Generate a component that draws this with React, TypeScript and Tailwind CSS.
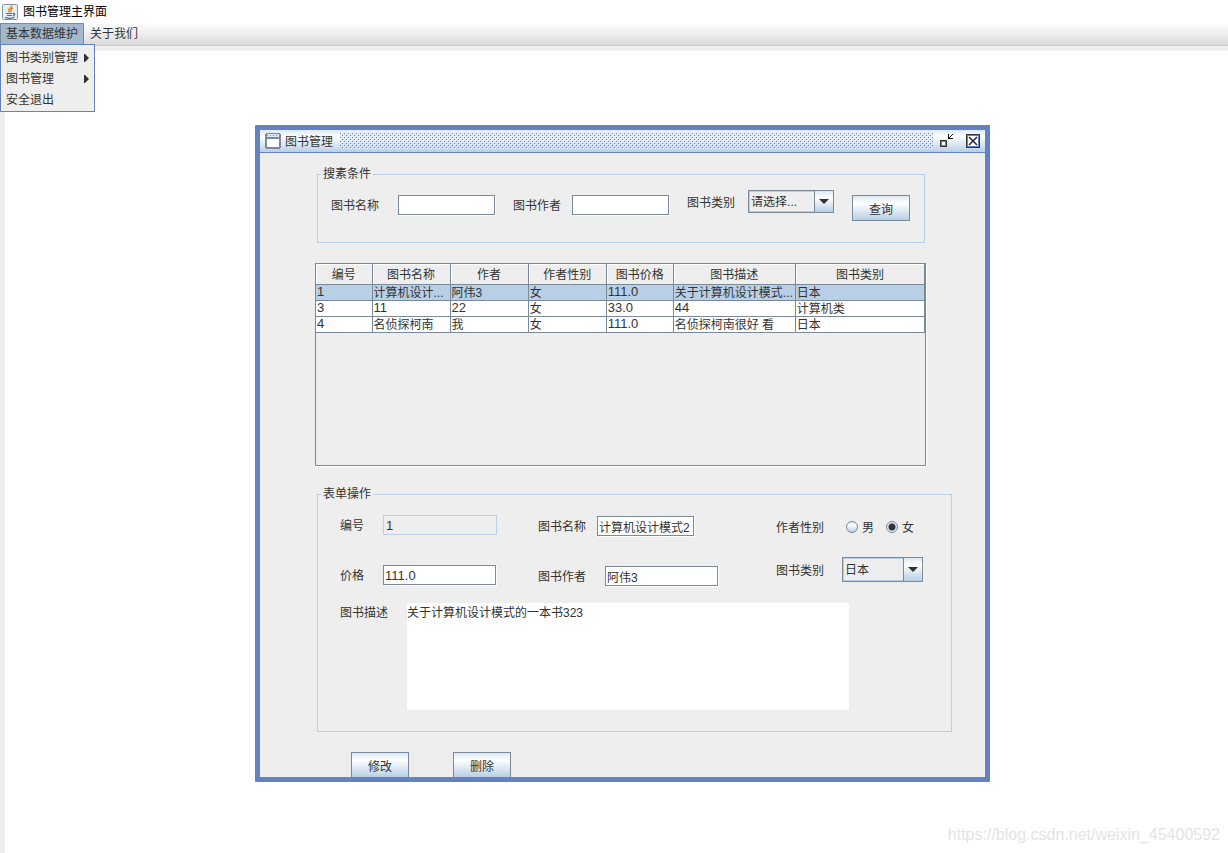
import type { ReactNode } from 'react';

const inputClass =
  'h-5 border border-[#7a8a99] bg-white px-px leading-none text-[#333] shadow-[1px_1px_0_#fff] outline-none';
const buttonClass =
  'w-[58px] border border-[#7a8a99] bg-linear-to-b from-[#dde8f3] via-white via-30% to-[#b8cfe5] pt-1 leading-none';

const columns = [
  { name: '编号', width: 'w-[56px]' },
  { name: '图书名称', width: 'w-[78px]' },
  { name: '作者', width: 'w-[78px]' },
  { name: '作者性别', width: 'w-[78px]' },
  { name: '图书价格', width: 'w-[67px]' },
  { name: '图书描述', width: 'w-[122px]' },
  { name: '图书类别', width: 'w-[129px]' },
];

const books = [
  ['1', '计算机设计...', '阿伟3', '女', '111.0', '关于计算机设计模式...', '日本'],
  ['3', '11', '22', '女', '33.0', '44', '计算机类'],
  ['4', '名侦探柯南', '我', '女', '111.0', '名侦探柯南很好 看', '日本'],
];

function JavaIcon() {
  return (
    <svg width="16" height="16" viewBox="0 0 16 16">
      <rect x="0.5" y="0.5" width="15" height="15" rx="1" fill="#e6edf3" stroke="#8296a8" />
      <path d="M9.500 1.500C10.500 4 6 4.500 6.500 6.500L8 8.500M11 4C8.500 5 8.500 6 9.500 8" fill="none" stroke="#e8862e" strokeWidth="1.500" />
      <path d="M4 9.500H10.500M5 11.500H10M3 13.500C6 14.500 10 14.500 12.500 13M11 9.500C13.500 9 13 11.500 11 11.500" fill="none" stroke="#3f6e96" strokeWidth="1.200" />
    </svg>
  );
}

function Caret() {
  return (
    <svg width="5" height="8" viewBox="0 0 5 8" className="shrink-0">
      <path d="M0 0H1L5 4L1 8H0Z" fill="#333" />
    </svg>
  );
}

function Bumps() {
  return (
    <svg className="h-4 min-w-0 flex-1" shapeRendering="crispEdges">
      <defs>
        <pattern id="bumps" width="4" height="4" patternUnits="userSpaceOnUse">
          <path d="M1 1h1v1h-1zM3 3h1v1h-1z" fill="#fff" />
          <path d="M0 0h1v1h-1zM2 2h1v1h-1z" fill="#5a82d6" />
        </pattern>
      </defs>
      <rect width="100%" height="100%" fill="#c9dcf3" fillOpacity="0.5" />
      <rect width="100%" height="100%" fill="url(#bumps)" />
    </svg>
  );
}

function Field({ id, label, className, children }: { id: string; label: string; className?: string; children: ReactNode }) {
  return (
    <div className={`flex items-center ${className ?? ''}`}>
      <label htmlFor={id} className="shrink-0 pt-[2px]">{label}</label>
      {children}
    </div>
  );
}

function Combo({ id, options, className }: { id: string; options: string[]; className: string }) {
  return (
    <div className={`relative border border-[#7a8a99] bg-[#eee] ${className}`}>
      <select id={id} className="h-full w-full appearance-none border border-[#b8cfe5] pl-px pr-5 leading-none outline-none">
        {options.map((option) => (
          <option key={option}>{option}</option>
        ))}
      </select>
      <span className="pointer-events-none absolute inset-y-0 right-0 flex w-[19px] items-center justify-center border-l border-[#7a8a99] bg-linear-to-b from-[#dde8f3] via-white via-30% to-[#b8cfe5]">
        <svg width="10" height="5" viewBox="0 0 10 5">
          <path d="M0 0H10L5 5Z" fill="#333" />
        </svg>
      </span>
    </div>
  );
}

function Radio({ label, checked }: { label: string; checked?: boolean }) {
  return (
    <label className="flex items-center gap-1">
      <input
        type="radio"
        name="sex"
        defaultChecked={checked}
        className="size-3 appearance-none rounded-full border border-[#7a8a99] bg-linear-to-b from-[#dde8f3] via-white via-30% to-[#b8cfe5] checked:bg-[radial-gradient(circle,#333_3px,#dde8f3_4px)]"
      />
      <span className="pt-[2px]">{label}</span>
    </label>
  );
}

function MenuBar() {
  return (
    <nav className="relative flex h-[23px] items-start border-b border-[#ccc] bg-linear-to-b from-white to-[#dadada]">
      <button className="h-[22px] w-[84px] border border-[#7a8a99] bg-[#a3b8cc] text-center">基本数据维护</button>
      <button className="h-[22px] px-[6px]">关于我们</button>
      <div className="absolute left-0 top-[21px] z-10 flex w-[95px] flex-col border border-[#6382bf] bg-[#eee] pb-px pt-[2px]">
        <button className="flex h-[21px] items-center justify-between px-[5px]">
          图书类别管理
          <Caret />
        </button>
        <button className="flex h-[21px] items-center justify-between px-[5px]">
          图书管理
          <Caret />
        </button>
        <button className="flex h-[21px] items-center px-[5px]">安全退出</button>
      </div>
    </nav>
  );
}

function SearchPanel() {
  return (
    <fieldset className="ml-[57px] mr-[60px] border border-[#b8cfe5] pb-[21px] pl-[13px]">
      <legend className="-ml-[10px] px-[2px] leading-3">搜素条件</legend>
      <div className="flex items-start pt-[10px]">
        <Field id="search-name" label="图书名称" className="mt-[5px] gap-[19px]">
          <input id="search-name" className={`w-[97px] ${inputClass}`} />
        </Field>
        <Field id="search-author" label="图书作者" className="ml-[18px] mt-[5px] gap-[11px]">
          <input id="search-author" className={`w-[97px] ${inputClass}`} />
        </Field>
        <Field id="search-type" label="图书类别" className="ml-[18px] gap-[13px]">
          <Combo id="search-type" options={['请选择...', '日本', '计算机类']} className="h-[23px] w-[86px]" />
        </Field>
        <button className={`ml-[18px] mt-[5px] h-[26px] ${buttonClass}`}>查询</button>
      </div>
    </fieldset>
  );
}

function BookTable() {
  return (
    <div className="ml-[55px] mr-[59px] mt-5 h-[203px] border border-[#7a8a99] shadow-[1px_1px_0_#fff]">
      <table className="w-full table-fixed border-collapse">
        <thead>
          <tr className="h-5">
            {columns.map((column) => (
              <th
                key={column.name}
                className={`border-b border-r border-[#7a8a99] p-0 pt-[2px] font-normal leading-4 shadow-[inset_1px_1px_0_#fff] ${column.width}`}
              >
                {column.name}
              </th>
            ))}
          </tr>
        </thead>
        <tbody>
          {books.map((book, row) => (
            <tr key={book[0]} className={row === 0 ? 'h-4 bg-[#b8cfe5]' : 'h-4 bg-white'}>
              {book.map((value, i) => (
                <td
                  key={i}
                  className={`whitespace-nowrap border-b border-r border-[#7a8a99] p-0 pl-px leading-[14px] ${/^[\d.]+$/.test(value) ? 'pb-px text-[13px]' : 'pt-px'}`}
                >
                  {value}
                </td>
              ))}
            </tr>
          ))}
        </tbody>
      </table>
    </div>
  );
}

function BookForm() {
  return (
    <fieldset className="ml-[57px] mr-[33px] mt-[22px] border border-[#b8cfe5] pb-[21px] pl-[22px]">
      <legend className="-ml-[19px] px-[2px] leading-3">表单操作</legend>
      <div className="flex items-start">
        <div className="flex w-[198px] flex-col gap-[30px] pt-[15px]">
          <Field id="book-id" label="编号" className="gap-[19px]">
            <input id="book-id" readOnly defaultValue="1" className="h-5 w-[114px] border border-[#b8cfe5] bg-[#eee] px-[2px] text-[13px] leading-none outline-none" />
          </Field>
          <Field id="book-price" label="价格" className="gap-[19px]">
            <input id="book-price" defaultValue="111.0" className={`w-[113px] text-[13px] ${inputClass}`} />
          </Field>
        </div>
        <div className="flex w-[238px] flex-col gap-[30px] pt-4">
          <Field id="book-name" label="图书名称" className="gap-[11px]">
            <input id="book-name" defaultValue="计算机设计模式2" className={`w-[97px] ${inputClass}`} />
          </Field>
          <Field id="book-author" label="图书作者" className="gap-[19px]">
            <input id="book-author" defaultValue="阿伟3" className={`w-[113px] ${inputClass}`} />
          </Field>
        </div>
        <div className="flex flex-col gap-5 pt-[17px]">
          <div className="flex h-5 items-center gap-3">
            <span className="mr-[10px] pt-[2px]">作者性别</span>
            <Radio label="男" />
            <Radio label="女" checked />
          </div>
          <Field id="book-type" label="图书类别" className="gap-[18px]">
            <Combo id="book-type" options={['日本', '计算机类']} className="h-[25px] w-[81px]" />
          </Field>
        </div>
      </div>
      <div className="mt-[17px] flex items-start gap-[19px]">
        <label htmlFor="book-desc" className="leading-5">图书描述</label>
        <textarea
          id="book-desc"
          defaultValue="关于计算机设计模式的一本书323"
          className="h-[107px] w-[442px] resize-none bg-white leading-5 outline-none"
        />
      </div>
    </fieldset>
  );
}

function BookWindow() {
  return (
    <section className="absolute left-[250px] top-[74px] w-[735px] rounded-[1px] border-[5px] border-[#6382bf] bg-[#eee]">
      <header className="flex h-[23px] items-center border-b border-[#6382bf] bg-linear-to-b from-[#dde8f3] via-white via-30% to-[#b8cfe5] px-[5px]">
        <svg width="16" height="16" viewBox="0 0 16 16" shapeRendering="crispEdges">
          <path d="M1 0h14v1h1v14h-1v1h-14v-1h-1v-14h1z" fill="#7a8a99" />
          <path d="M2 1h12v3h-12z" fill="#dde8f3" />
          <path d="M2 6h12v8h-12z" fill="#fff" />
          <path d="M2 2.500h12" stroke="#6382bf" strokeDasharray="1 2" />
        </svg>
        <h2 className="ml-1 mr-[7px] pt-[2px]">图书管理</h2>
        <Bumps />
        <button aria-label="还原" className="ml-[7px]">
          <svg width="14" height="14" viewBox="0 0 14 14" shapeRendering="crispEdges">
            <path d="M0 6h7v7h-7z" fill="#333" />
            <path d="M1 7h5v5h-5z" fill="#6382bf" />
            <path d="M2 8h3v3h-3z" fill="#fff" />
            <path d="M8 0h1v4h4v1h-5zM9 3h1v1h-1zM10 2h1v1h-1zM11 1h1v1h-1zM12 0h1v1h-1z" fill="#111" />
          </svg>
        </button>
        <button aria-label="关闭" className="ml-3">
          <svg width="14" height="14" viewBox="0 0 14 14">
            <path d="M0 0h14v14h-14z" fill="#333" />
            <path d="M1 1h12v12h-12z" fill="#6382bf" />
            <path d="M2 2h10v10h-10z" fill="#fff" />
            <path d="M3 3l8 8M11 3l-8 8" stroke="#223" strokeWidth="1.500" />
          </svg>
        </button>
      </header>
      <div className="pt-[15px]">
        <SearchPanel />
        <BookTable />
        <BookForm />
        <div className="ml-[91px] mt-5 flex gap-11">
          <button className={`h-[25px] border-b-0 ${buttonClass}`}>修改</button>
          <button className={`h-[25px] border-b-0 ${buttonClass}`}>删除</button>
        </div>
      </div>
    </section>
  );
}

export default function App() {
  return (
    <div className="flex min-h-screen flex-col bg-[#eee] font-['Liberation_Sans','Noto_Sans_CJK_SC',sans-serif] text-xs text-[#333]">
      <header className="flex h-[23px] items-center gap-[5px] bg-white pl-[2px] text-black">
        <JavaIcon />
        <h1>图书管理主界面</h1>
      </header>
      <MenuBar />
      <main className="relative ml-[5px] mt-[5px] flex min-h-[802px] flex-1 items-end justify-end bg-white">
        <BookWindow />
        <p className="pb-[6px] pr-2 text-base text-[#e4e4e4]">https://blog.csdn.net/weixin_45400592</p>
      </main>
    </div>
  );
}
